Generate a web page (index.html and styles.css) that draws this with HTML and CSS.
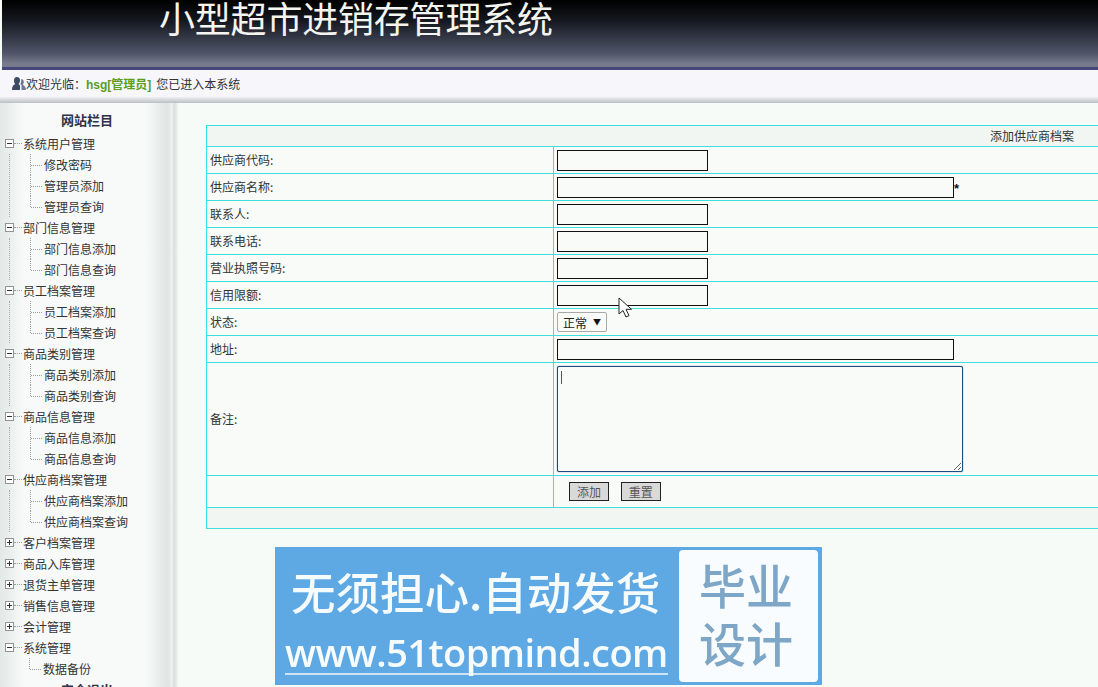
FILE: index.html
```html
<!DOCTYPE html>
<html lang="zh-CN">
<head>
  <meta charset="UTF-8" />
  <title>小型超市进销存管理系统</title>
  <link rel="stylesheet" href="styles.css">
</head>
<body>

  <!-- Header -->
  <div class="header">
    <h1>小型超市进销存管理系统</h1>
  </div>

  <!-- Welcome bar -->
  <div class="welcome">
    <svg class="user-icon" width="14" height="15" viewBox="0 0 14 15">
      <path d="M5 1c2 0 3 1.500 3 3.500 0 1.500-.6 2.700-1.400 3.400L8 9.500V14H0c0-3 .8-5 3.200-6C2.400 7.200 2 6 2 4.500 2 2.500 3 1 5 1z" fill="#3d4a63"/>
      <path d="M9 3c1.800 0 2.800 1.300 2.800 3 0 1.200-.5 2.200-1.100 2.800C12.600 9.600 14 11.500 14 14H9.500V9.200L8.200 7.900C9 7 9.300 5.800 9.100 3z" fill="#6c7a94"/>
    </svg>
    <span>欢迎光临：</span><b class="user-name">hsg[管理员]</b><span class="welcome-tail">您已进入本系统</span>
  </div>
  <div class="welcome-edge"></div>

  <div class="layout">

    <!-- Left menu -->
    <div class="sidebar">
      <div class="menu-title">网站栏目</div>

      <div class="node open"><i class="box"></i>系统用户管理</div>
      <div class="leaves">
        <div class="leaf">修改密码</div>
        <div class="leaf">管理员添加</div>
        <div class="leaf last">管理员查询</div>
      </div>

      <div class="node open"><i class="box"></i>部门信息管理</div>
      <div class="leaves">
        <div class="leaf">部门信息添加</div>
        <div class="leaf last">部门信息查询</div>
      </div>

      <div class="node open"><i class="box"></i>员工档案管理</div>
      <div class="leaves">
        <div class="leaf">员工档案添加</div>
        <div class="leaf last">员工档案查询</div>
      </div>

      <div class="node open"><i class="box"></i>商品类别管理</div>
      <div class="leaves">
        <div class="leaf">商品类别添加</div>
        <div class="leaf last">商品类别查询</div>
      </div>

      <div class="node open"><i class="box"></i>商品信息管理</div>
      <div class="leaves">
        <div class="leaf">商品信息添加</div>
        <div class="leaf last">商品信息查询</div>
      </div>

      <div class="node open"><i class="box"></i>供应商档案管理</div>
      <div class="leaves">
        <div class="leaf">供应商档案添加</div>
        <div class="leaf last">供应商档案查询</div>
      </div>

      <div class="node closed"><i class="box"></i>客户档案管理</div>
      <div class="node closed"><i class="box"></i>商品入库管理</div>
      <div class="node closed"><i class="box"></i>退货主单管理</div>
      <div class="node closed"><i class="box"></i>销售信息管理</div>
      <div class="node closed"><i class="box"></i>会计管理</div>

      <div class="node open"><i class="box"></i>系统管理</div>
      <div class="leaves end">
        <div class="leaf last">数据备份</div>
      </div>

      <div class="menu-title">安全退出</div>
    </div>

    <!-- Form -->
    <div class="main">
      <table class="form-table">
        <colgroup>
          <col class="label-col">
          <col>
        </colgroup>
        <tr class="head-row">
          <td colspan="2">添加供应商档案</td>
        </tr>
        <tr>
          <td>供应商代码:</td>
          <td><input class="short" type="text" /></td>
        </tr>
        <tr>
          <td>供应商名称:</td>
          <td><input class="long" type="text" /><span class="req">*</span></td>
        </tr>
        <tr>
          <td>联系人:</td>
          <td><input class="short" type="text" /></td>
        </tr>
        <tr>
          <td>联系电话:</td>
          <td><input class="short" type="text" /></td>
        </tr>
        <tr>
          <td>营业执照号码:</td>
          <td><input class="short" type="text" /></td>
        </tr>
        <tr>
          <td>信用限额:</td>
          <td><input class="short" type="text" /></td>
        </tr>
        <tr>
          <td>状态:</td>
          <td>
            <div class="select-wrap">
              <select><option>正常</option><option>停用</option></select>
            </div>
          </td>
        </tr>
        <tr>
          <td>地址:</td>
          <td><input class="long" type="text" /></td>
        </tr>
        <tr class="memo-row">
          <td>备注:</td>
          <td>
            <div class="memo-wrap">
              <textarea></textarea>
              <span class="caret"></span>
            </div>
          </td>
        </tr>
        <tr class="button-row">
          <td></td>
          <td>
            <button type="button">添加</button>
            <button type="reset">重置</button>
          </td>
        </tr>
        <tr class="foot-row">
          <td colspan="2"></td>
        </tr>
      </table>

      <!-- Banner -->
      <div class="banner">
        <div class="banner-left">
          <div class="banner-slogan">无须担心.自动发货</div>
          <div class="banner-url">www.51topmind.com</div>
        </div>
        <div class="banner-badge">毕业<br>设计</div>
      </div>
    </div>
  </div>

  <!-- Mouse pointer in the screenshot -->
  <svg class="pointer" width="14" height="22" viewBox="0 0 14 22">
    <path d="M1 1v16l4-3.500 3 6.500 3-1.400-3-6.300h5.500z" fill="#fff" stroke="#222" stroke-width="1"/>
  </svg>

</body>
</html>
```

FILE: styles.css
```css
* {
  box-sizing: border-box;
}

html, body {
  margin: 0;
  padding: 0;
  height: 100vh;
  overflow: hidden;
}

body {
  font-family: "Noto Sans CJK SC", "Liberation Sans", sans-serif;
  font-size: 12px;
  color: #333;
  background: #f6fbf8;
  position: relative;
}

.header {
  height: 70px;
  margin-left: 2px;
  padding-left: 157px;
  background: linear-gradient(to bottom, #000 0%, #14171e 30%, #50566a 80%, #767c8c 95%);
  border-bottom: 3px solid #47477c;
}

.header h1 {
  margin: 0;
  font-family: "Liberation Serif", "Noto Sans CJK SC", serif;
  font-size: 36px;
  font-weight: 400;
  letter-spacing: -0.2px;
  line-height: 43px;
  color: #f4f4f0;
}

.welcome {
  height: 27px;
  padding-left: 12px;
  display: flex;
  align-items: center;
  background: #f7f7fb;
}

.user-icon {
  margin-right: 0;
}

.user-name {
  color: #5a9e1c;
  font-family: "Liberation Sans", "Noto Sans CJK SC", sans-serif;
}

.welcome-tail {
  margin-left: 5px;
}

.welcome-edge {
  height: 6px;
  background: linear-gradient(to bottom, #eef0f0, #bcc0c4);
}

.layout {
  display: flex;
}

.sidebar {
  width: 178px;
  flex-shrink: 0;
  padding-top: 6px;
  background: linear-gradient(to right, #e2e8e6 0, #f7faf9 24px, #f7faf9 146px, #dfe5e3 168px, #eef2f1 172px, #d9dfdd 174px, #f0f3f2 178px);
}

.menu-title {
  width: 174px;
  height: 21px;
  line-height: 21px;
  text-align: center;
  font-size: 13px;
  font-weight: bold;
  color: #2f3347;
}

.menu-title:first-child {
  margin-bottom: 3px;
}

.node {
  height: 21px;
  padding-left: 5px;
  display: flex;
  align-items: center;
  white-space: nowrap;
}

.box {
  width: 9px;
  height: 9px;
  margin-right: 9px;
  border: 1px solid #8f9590;
  background: linear-gradient(#333, #333) center / 5px 1px no-repeat, #fff;
  position: relative;
}

.closed .box {
  background: linear-gradient(#333, #333) center / 5px 1px no-repeat, linear-gradient(#333, #333) center / 1px 5px no-repeat, #fff;
}

/* little dash between box and label */
.box::after {
  content: "";
  position: absolute;
  left: 8px;
  top: 3px;
  width: 8px;
  border-top: 1px dotted #9a9f9a;
}

.leaves {
  margin-left: 9px;
  border-left: 1px dotted #a5aaa5;
}

.leaves.end {
  border-left: none;
}

.leaf {
  height: 21px;
  line-height: 21px;
  padding-left: 34px;
  white-space: nowrap;
  position: relative;
}

.leaf::before {
  content: "";
  position: absolute;
  left: 20px;
  top: 0;
  height: 100%;
  border-left: 1px dotted #9a9f9a;
}

.leaf.last::before {
  height: 50%;
}

.leaf::after {
  content: "";
  position: absolute;
  left: 21px;
  top: 50%;
  width: 11px;
  border-top: 1px dotted #9a9f9a;
}

.main {
  flex: 1;
  min-width: 0;
  padding: 22px 0 0 28px;
}

.form-table {
  width: 1652px;
  table-layout: fixed;
  border-collapse: collapse;
  background: #f8fbf8;
}

.label-col {
  width: 347px;
}

.form-table td {
  height: 27px;
  padding: 0 3px;
  border: 1px solid #3fe0dc;
}

.form-table td:first-child {
  padding-bottom: 2px;
}

.head-row td {
  height: 21px;
  text-align: center;
  background: #f2f6f2;
}

.memo-row td {
  height: 113px;
}

.button-row td {
  height: 32px;
}

.button-row td:last-child {
  padding-left: 15px;
  padding-bottom: 2px;
}

.foot-row td {
  height: 21px;
  background: #f2f6f2;
}

input {
  height: 21px;
  padding: 0 3px;
  border: 1px solid #111;
  background: #f8fbf8;
  vertical-align: middle;
}

input.short {
  width: 151px;
}

input.long {
  width: 397px;
}

.req {
  font-family: "Liberation Sans", sans-serif;
  font-size: 13px;
  font-weight: bold;
  color: #111;
  vertical-align: -3px;
}

.select-wrap {
  width: 50px;
  height: 20px;
  position: relative;
}

.select-wrap::after {
  content: "▼";
  position: absolute;
  right: 6px;
  top: 4px;
  font-size: 8px;
  color: #111;
  pointer-events: none;
}

select {
  width: 50px;
  height: 20px;
  padding: 0 0 0 5px;
  font-family: inherit;
  font-size: 12px;
  color: #222;
  background: #f8fbf8;
  border: 1px solid #a9a9a9;
  border-radius: 2px;
  appearance: none;
  display: block;
}

.memo-wrap {
  width: 406px;
  height: 106px;
  position: relative;
}

textarea {
  width: 406px;
  height: 106px;
  display: block;
  border: 1px solid #1f4a80;
  box-shadow: 0 0 1px #1f4a80;
  border-radius: 2px;
  background: #f8fbf8;
}

.caret {
  position: absolute;
  left: 4px;
  top: 5px;
  height: 13px;
  border-left: 1px solid #555;
}

button {
  width: 40px;
  height: 19px;
  padding: 0;
  margin-right: 9px;
  font-family: inherit;
  font-size: 12px;
  line-height: 17px;
  color: #555;
  background: #d8d9d8;
  border: 1px solid #222;
  vertical-align: middle;
}

/* banner picture */
.banner {
  width: 547px;
  height: 138px;
  margin: 18px 0 0 69px;
  padding: 3px 4px 3px 0;
  display: flex;
  background: #5ea8e4;
  filter: blur(0.4px);
}

.banner-left {
  width: 404px;
  padding-left: 10px;
  color: #f6fbfe;
  white-space: nowrap;
}

.banner-slogan {
  height: 82px;
  padding: 0 0 0 6px;
  font-size: 44.5px;
  line-height: 82px;
  font-weight: 500;
}

.banner-url {
  display: inline-block;
  font-family: "Open Sans", "Liberation Sans", sans-serif;
  font-size: 38px;
  font-weight: 600;
  letter-spacing: -0.55px;
  line-height: 41px;
  border-bottom: 2px solid #cfe3f6;
}

.banner-badge {
  width: 139px;
  height: 132px;
  padding-left: 20px;
  padding-top: 9px;
  border-radius: 4px;
  background: #f8fcfe;
  color: #7ea6c6;
  font-family: "Liberation Sans", "Noto Sans CJK SC", sans-serif;
  font-size: 47px;
  font-weight: 500;
  line-height: 58px;
}

.pointer {
  position: absolute;
  left: 618px;
  top: 297px;
}
```
